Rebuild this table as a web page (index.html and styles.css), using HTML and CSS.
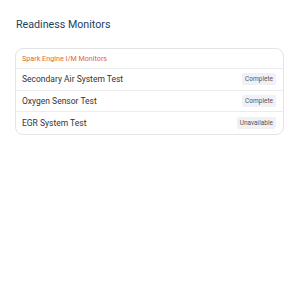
FILE: index.html
```html
<!DOCTYPE html>
<html lang="en">
<head>
    <meta charset="UTF-8">
    <meta name="viewport" content="width=device-width, initial-scale=1.0">
    <title>Readiness Monitors</title>
    <link rel="stylesheet" href="styles.css">
</head>

<body>
    <div class="page">
        <h2 class="title">Readiness Monitors</h2>

        <div class="card">
            <div class="card-head">Spark Engine I/M Monitors</div>
            <div class="row">
                <span class="name">Secondary Air System Test</span>
                <span class="badge">Complete</span>
            </div>
            <div class="row">
                <span class="name">Oxygen Sensor Test</span>
                <span class="badge">Complete</span>
            </div>
            <div class="row">
                <span class="name">EGR System Test</span>
                <span class="badge">Unavailable</span>
            </div>
        </div>
    </div>
</body>
</html>
```

FILE: styles.css
```css
*{
    font-family: Roboto, "Noto Sans", sans-serif;
    box-sizing: border-box;
}

body{
    margin: 0;
    background-color: #ffffff;
}

.page{
    padding: 18px 16px 16px 15px;
}

.title{
    margin: 0 0 17px 1px;
    font-size: 10.7px;
    line-height: 13px;
    font-weight: 400;
    color: #1b3f63;
}

.card{
    border: 1px solid #e4e4e7;
    border-radius: 8px;
    overflow: hidden;
}

.card-head{
    height: 20px;
    display: flex;
    align-items: center;
    padding: 0 6px;
    font-size: 7.2px;
    color: #e2692d;
    border-bottom: 1px solid #ececef;
}

.row{
    display: flex;
    justify-content: space-between;
    align-items: center;
    height: 21.6px;
    padding: 0 7px 0 6px;
    border-bottom: 1px solid #ececef;
}

.row:last-child{
    border-bottom: none;
}

.name{
    font-size: 8.5px;
    color: #333333;
}

.badge{
    font-size: 6.5px;
    color: #555555;
    background-color: #f1f1f5;
    padding: 2px 3px;
    border-radius: 2px;
}
```
